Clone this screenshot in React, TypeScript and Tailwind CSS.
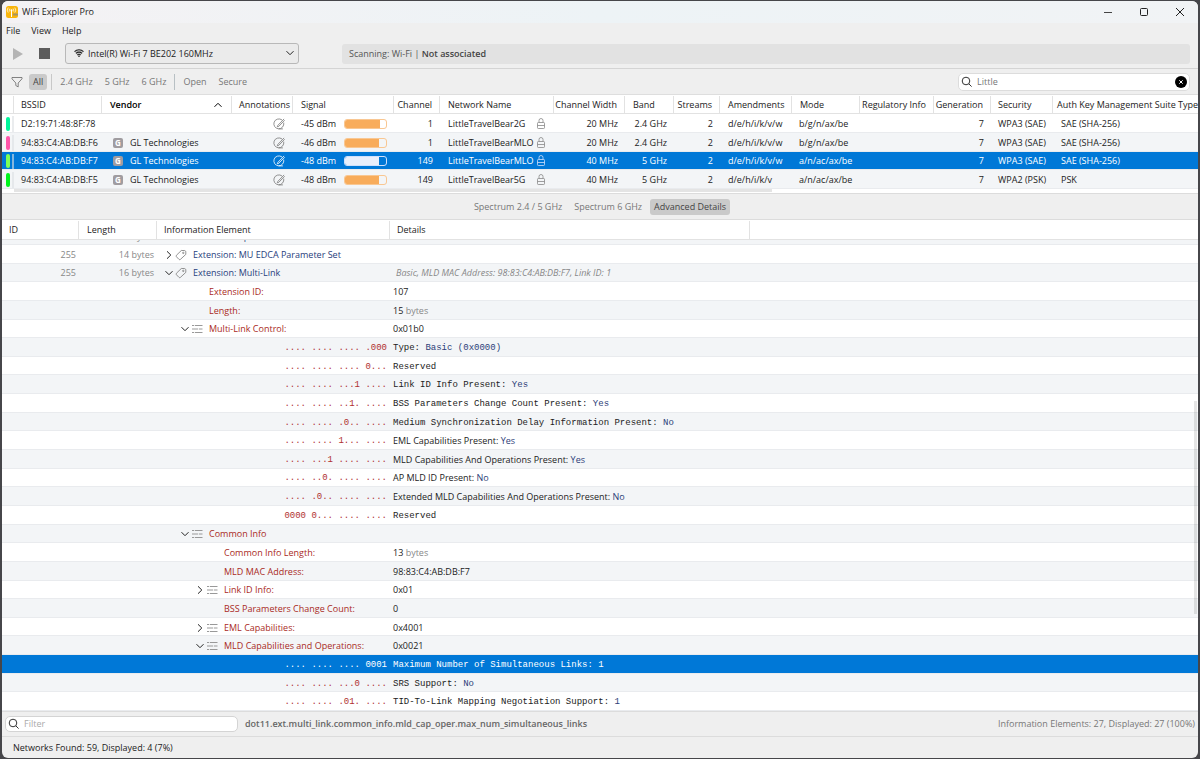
import type { ReactNode } from "react";
import clsx from "clsx";

type Network = {
  color: string;
  bssid: string;
  vendor?: string;
  signal: string;
  level: number;
  channel: string;
  name: string;
  width: string;
  band: string;
  amendments: string;
  mode: string;
  security: string;
  akm: string;
  selected?: boolean;
};

type Element = {
  id?: string;
  length?: string;
  depth?: 0 | 1 | 2;
  state?: "open" | "closed";
  label?: string;
  bits?: string;
  text?: string;
  value?: string;
  unit?: string;
  mono?: boolean;
  summary?: string;
  selected?: boolean;
};

const networks: Network[] = [
  { color: "bg-[#00f59b]", bssid: "D2:19:71:48:8F:78", signal: "-45 dBm", level: 86, channel: "1", name: "LittleTravelBear2G", width: "20 MHz", band: "2.4 GHz", amendments: "d/e/h/i/k/v/w", mode: "b/g/n/ax/be", security: "WPA3 (SAE)", akm: "SAE (SHA-256)" },
  { color: "bg-[#ff55aa]", bssid: "94:83:C4:AB:DB:F6", vendor: "GL Technologies", signal: "-46 dBm", level: 84, channel: "1", name: "LittleTravelBearMLO", width: "20 MHz", band: "2.4 GHz", amendments: "d/e/h/i/k/v/w", mode: "b/g/n/ax/be", security: "WPA3 (SAE)", akm: "SAE (SHA-256)" },
  { color: "bg-[#7dff55]", bssid: "94:83:C4:AB:DB:F7", vendor: "GL Technologies", signal: "-48 dBm", level: 82, channel: "149", name: "LittleTravelBearMLO", width: "40 MHz", band: "5 GHz", amendments: "d/e/h/i/k/v/w", mode: "a/n/ac/ax/be", security: "WPA3 (SAE)", akm: "SAE (SHA-256)", selected: true },
  { color: "bg-[#00f51d]", bssid: "94:83:C4:AB:DB:F5", vendor: "GL Technologies", signal: "-48 dBm", level: 82, channel: "149", name: "LittleTravelBear5G", width: "40 MHz", band: "5 GHz", amendments: "d/e/h/i/k/v", mode: "a/n/ac/ax/be", security: "WPA2 (PSK)", akm: "PSK" },
];

const elements: Element[] = [
  { id: "255", length: "14 bytes", depth: 0, state: "closed", label: "Extension: MU EDCA Parameter Set" },
  { id: "255", length: "16 bytes", depth: 0, state: "open", label: "Extension: Multi-Link", summary: "Basic, MLD MAC Address: 98:83:C4:AB:DB:F7, Link ID: 1" },
  { depth: 1, label: "Extension ID:", text: "107" },
  { depth: 1, label: "Length:", text: "15", unit: "bytes" },
  { depth: 1, state: "open", label: "Multi-Link Control:", text: "0x01b0" },
  { bits: ".... .... .... .000", text: "Type:", value: "Basic (0x0000)", mono: true },
  { bits: ".... .... .... 0...", text: "Reserved", mono: true },
  { bits: ".... .... ...1 ....", text: "Link ID Info Present:", value: "Yes", mono: true },
  { bits: ".... .... ..1. ....", text: "BSS Parameters Change Count Present:", value: "Yes", mono: true },
  { bits: ".... .... .0.. ....", text: "Medium Synchronization Delay Information Present:", value: "No", mono: true },
  { bits: ".... .... 1... ....", text: "EML Capabilities Present:", value: "Yes" },
  { bits: ".... ...1 .... ....", text: "MLD Capabilities And Operations Present:", value: "Yes" },
  { bits: ".... ..0. .... ....", text: "AP MLD ID Present:", value: "No" },
  { bits: ".... .0.. .... ....", text: "Extended MLD Capabilities And Operations Present:", value: "No" },
  { bits: "0000 0... .... ....", text: "Reserved", mono: true },
  { depth: 1, state: "open", label: "Common Info" },
  { depth: 2, label: "Common Info Length:", text: "13", unit: "bytes" },
  { depth: 2, label: "MLD MAC Address:", text: "98:83:C4:AB:DB:F7" },
  { depth: 2, state: "closed", label: "Link ID Info:", text: "0x01" },
  { depth: 2, label: "BSS Parameters Change Count:", text: "0" },
  { depth: 2, state: "closed", label: "EML Capabilities:", text: "0x4001" },
  { depth: 2, state: "open", label: "MLD Capabilities and Operations:", text: "0x0021" },
  { bits: ".... .... .... 0001", text: "Maximum Number of Simultaneous Links:", value: "1", mono: true, selected: true },
  { bits: ".... .... ...0 ....", text: "SRS Support:", value: "No", mono: true },
  { bits: ".... .... .01. ....", text: "TID-To-Link Mapping Negotiation Support:", value: "1", mono: true },
];

const networkCols =
  "grid grid-cols-[12px_88px_130px_61px_101px_46px_114px_71px_49px_46px_72px_68px_74px_57px_62px_1fr] items-center";
const elementCols = "grid grid-cols-[77px_78px_233px_360px_1fr] items-center";
const monoFont = "font-['Liberation_Mono',monospace]";

function AppIcon() {
  return (
    <svg viewBox="0 0 12 12" className="size-3 shrink-0">
      <rect width="12" height="12" rx="2.5" fill="#f9b50b" />
      <path d="M5.5 5v6" stroke="#fff" strokeWidth="1" />
      <path d="M3.8 2.6a2.2 2.2 0 0 0 0 3M7.2 2.6a2.2 2.2 0 0 1 0 3M2.2 1.6a4 4 0 0 0 0 5M8.8 1.6a4 4 0 0 1 0 5" fill="none" stroke="#fff" strokeWidth=".7" />
      <circle cx="5.5" cy="4.2" r="1" fill="#fff" />
      <rect x="7" y="7.5" width="5" height="2" rx=".5" fill="#a39468" />
    </svg>
  );
}

function Chevron({ open, className }: { open?: boolean; className?: string }) {
  return (
    <svg viewBox="0 0 10 10" className={clsx("size-2.5 shrink-0", className)} fill="none" stroke="currentColor" strokeWidth="1">
      <path d={open ? "M1.5 3.2 5 6.7l3.5-3.5" : "M3 1.3 6.8 5 3 8.7"} />
    </svg>
  );
}

function SearchIcon() {
  return (
    <svg viewBox="0 0 12 12" className="size-3 shrink-0" fill="none" stroke="#333" strokeWidth="1">
      <circle cx="5" cy="5" r="3.8" />
      <path d="m7.8 7.8 2.8 2.8" />
    </svg>
  );
}

function TagIcon() {
  return (
    <svg viewBox="0 0 12 12" className="size-3 shrink-0" fill="none" stroke="#777" strokeWidth=".8" strokeLinejoin="round">
      <path d="M6.3 1.5h2.9c1 0 1.6.6 1.6 1.6v2.3l-5.4 5c-.5.4-1 .4-1.4 0L1.4 7.7c-.4-.4-.4-.9 0-1.4z" />
      <circle cx="8.3" cy="3.9" r=".7" />
    </svg>
  );
}

function FieldsIcon() {
  return (
    <svg viewBox="0 0 12 12" className="size-3 shrink-0" stroke="#999" strokeWidth="1">
      <path d="M1 2.5h2M3.8 2.5h7.7M1 6h6M7.8 6h3.7M1 9.500h2M3.8 9.500h7.7" />
    </svg>
  );
}

function AnnotationIcon() {
  return (
    <svg viewBox="0 0 12 12" className="size-3" fill="none" stroke="currentColor" strokeWidth=".8" strokeLinecap="round">
      <path d="M8.7 1.7A5 5 0 1 0 10.8 5" />
      <path d="m10.8 1.2-6 6.2-.5 1.4 1.5-.5 5.6-5.8M6 10.900h3.500" />
    </svg>
  );
}

function LockIcon() {
  return (
    <svg viewBox="0 0 10 12" className="h-3 w-2.5" fill="none" stroke="currentColor" strokeWidth=".8">
      <rect x="1.5" y="4.5" width="7" height="6" rx=".8" />
      <path d="M3 4.500v-2a2 2 0 0 1 4 0v2M1.500 7.500h7" />
    </svg>
  );
}

function Th({ children, className }: { children?: ReactNode; className?: string }) {
  return (
    <th
      scope="col"
      className={clsx("flex h-full items-center whitespace-nowrap border-r border-[#e2e2e2] text-left font-normal", className ?? "px-[7px]")}
    >
      {children}
    </th>
  );
}

function FilterButton({ children, active }: { children: ReactNode; active?: boolean }) {
  return (
    <button type="button" className={clsx("h-4 rounded-[3px] px-1", active ? "bg-[#cacaca] text-[#444]" : "text-[#777]")}>
      {children}
    </button>
  );
}

function NetworkTable() {
  return (
    <table className="flex flex-col bg-white">
      <thead>
        <tr className={clsx(networkCols, "h-[19px] border-b border-[#e2e2e2] pt-px")}>
          <Th className="px-0" />
          <Th>BSSID</Th>
          <Th className="justify-between px-2 font-semibold text-black">
            Vendor
            <Chevron open className="size-2 rotate-180" />
          </Th>
          <Th>Annotations</Th>
          <Th className="px-2">Signal</Th>
          <Th className="justify-end px-[7px]">Channel</Th>
          <Th className="px-2">Network Name</Th>
          <Th className="justify-end px-[7px]">Channel Width</Th>
          <Th className="px-2">Band</Th>
          <Th className="justify-end px-[7px]">Streams</Th>
          <Th className="px-2">Amendments</Th>
          <Th className="px-2">Mode</Th>
          <Th className="justify-end px-[7px]">Regulatory Info</Th>
          <Th className="justify-end px-[7px]">Generation</Th>
          <Th>Security</Th>
          <Th className="pl-1">Auth Key Management Suite Type</Th>
        </tr>
      </thead>
      <tbody className="grid h-[75px] auto-rows-fr">
        {networks.map((n) => (
          <tr
            key={n.bssid}
            className={clsx(networkCols, "border-b border-[#e9ebee] pt-[2px]", n.selected ? "bg-[#0078d7] text-white" : "odd:bg-white even:bg-[#f3f5f7]")}
          >
            <td className="flex h-full items-center border-r-2 border-[#dcdfe2]/60 pl-1">
              <span className={clsx("h-3.5 w-1 rounded-sm", n.color)} />
            </td>
            <td className="pl-[7px]">{n.bssid}</td>
            <td className="flex items-center gap-[7px] pl-[11px]">
              {n.vendor && (
                <>
                  <span className="grid size-2.5 place-items-center rounded-[2px] bg-[#a09ca0] text-[8px] font-bold leading-none text-white">G</span>
                  {n.vendor}
                </>
              )}
            </td>
            <td className={clsx("flex justify-end pr-2", n.selected ? "text-white" : "text-[#777]")}>
              <AnnotationIcon />
            </td>
            <td className="flex items-center justify-between pl-2 pr-[7px]">
              {n.signal}
              <span className={clsx("h-2.5 w-[43px] overflow-hidden rounded-[3px] border", n.selected ? "border-[#cfe0fb]" : "border-[#f9c792]")}>
                <span className={clsx("block h-full", n.selected ? "bg-[#e9effb]" : "bg-[#f8ac5b]")} style={{ width: `${n.level}%` }} />
              </span>
            </td>
            <td className="pr-[7px] text-right">{n.channel}</td>
            <td className="flex items-center justify-between pl-2 pr-2">
              {n.name}
              <span className={n.selected ? "text-[#cfe0fb]" : "text-[#888]"}>
                <LockIcon />
              </span>
            </td>
            <td className="pr-[7px] text-right">{n.width}</td>
            <td className="pr-[7px] text-right">{n.band}</td>
            <td className="pr-[7px] text-right">2</td>
            <td className="pl-2">{n.amendments}</td>
            <td className="pl-[7px]">{n.mode}</td>
            <td />
            <td className="pr-[7px] text-right">7</td>
            <td className="pl-[7px]">{n.security}</td>
            <td className="pl-2">{n.akm}</td>
          </tr>
        ))}
      </tbody>
    </table>
  );
}

function ElementRow({ el }: { el: Element }) {
  return (
    <tr
      className={clsx(
        elementCols,
        "min-h-0 overflow-hidden border-b border-[#e9ebee] pt-[2px]",
        el.selected ? "bg-[#0078d7] text-white" : "odd:bg-white even:bg-[#f3f5f7]",
      )}
    >
      <td className="pr-[3px] text-right text-[#888]">{el.id}</td>
      <td className="pr-[3px] text-right text-[#888]">{el.length}</td>
      {el.bits ? (
        <td className={clsx(monoFont, "whitespace-pre pr-[3px] text-right", el.selected ? "text-white" : "text-[#b03030]")}>{el.bits}</td>
      ) : (
        <td
          className={clsx(
            "flex items-center",
            el.depth === 0 && "pl-[7px] text-[#28407c]",
            el.depth === 1 && "pl-[23px] text-[#a92a24]",
            el.depth === 2 && "pl-[38px] text-[#a92a24]",
          )}
        >
          <span className="flex w-[29px] items-center gap-px">
            {el.state && (
              <>
                <button type="button" aria-label={el.state === "open" ? "Collapse" : "Expand"} className="text-[#222]">
                  <Chevron open={el.state === "open"} />
                </button>
                {el.depth === 0 ? <TagIcon /> : <FieldsIcon />}
              </>
            )}
          </span>
          {el.label}
        </td>
      )}
      <td className={clsx("whitespace-nowrap pl-[3px]", el.mono && monoFont)}>
        {el.summary && <em className="pl-[3px] text-[#888]">{el.summary}</em>}
        {el.text}
        {el.value && <span className={el.selected ? "text-white" : "text-[#2c3e78]"}> {el.value}</span>}
        {el.unit && <span className="text-[#888]"> {el.unit}</span>}
      </td>
      <td />
    </tr>
  );
}

function ElementTable() {
  return (
    <div className="relative flex min-h-0 flex-1 flex-col bg-white">
      <table className="flex min-h-0 flex-1 flex-col">
        <thead>
          <tr className={clsx(elementCols, "h-5 border-b border-[#e2e2e2] pt-px")}>
            <Th>ID</Th>
            <Th className="px-2">Length</Th>
            <Th>Information Element</Th>
            <Th>Details</Th>
            <th />
          </tr>
        </thead>
        {/* row scrolled most of the way under the header */}
        <tbody className="flex h-[5px] flex-col justify-end overflow-hidden border-b border-[#e9ebee] bg-[#f3f5f7]">
          <tr className={clsx(elementCols, "shrink-0 pb-px")}>
            <td className="pr-[3px] text-right text-[#888]">255</td>
            <td className="pr-[3px] text-right text-[#888]">7 bytes</td>
            <td className="pl-9 text-[#28407c]">Extension: Spatial Reuse Parameter</td>
          </tr>
        </tbody>
        <tbody className="grid min-h-0 flex-1 auto-rows-fr">
          {elements.map((el, i) => (
            <ElementRow key={i} el={el} />
          ))}
        </tbody>
      </table>
      <div className="absolute right-px top-[181px] h-[213px] w-[3px] bg-black/10" />
    </div>
  );
}

export default function App() {
  return (
    <div className="h-screen min-h-[600px] bg-[#46464a] px-[2px] py-px">
      <main className="flex h-full flex-col overflow-hidden rounded-md bg-[#efefef] font-['Open_Sans','Noto_Sans',sans-serif] text-[9px] leading-3 text-[#222]">
        <header className="flex h-[22px] shrink-0 items-center gap-1 bg-gradient-to-r from-[#f4f2f4] via-[#edf3f6] to-[#f1f3f5] pl-1">
          <AppIcon />
          <h1>WiFi Explorer Pro</h1>
          <div className="ml-auto flex items-center">
            <button type="button" aria-label="Minimize" className="grid w-9 place-items-center">
              <svg viewBox="0 0 10 10" className="size-2.5" stroke="#444"><path d="M1 5.5h8" /></svg>
            </button>
            <button type="button" aria-label="Maximize" className="grid w-9 place-items-center">
              <svg viewBox="0 0 10 10" className="size-2.5" fill="none" stroke="#222"><rect x="1.5" y="1.5" width="7" height="7" rx="1" /></svg>
            </button>
            <button type="button" aria-label="Close" className="grid w-9 place-items-center">
              <svg viewBox="0 0 10 10" className="size-2.5" stroke="#222"><path d="m1 1 8 8M9 1 1 9" /></svg>
            </button>
          </div>
        </header>

        <nav className="flex h-4 shrink-0 items-center gap-[11px] pl-1">
          <button type="button">File</button>
          <button type="button">View</button>
          <button type="button">Help</button>
        </nav>

        <section className="flex h-[30px] shrink-0 items-center border-b border-[#d4d4d4] pl-[11px] pr-2">
          <button type="button" aria-label="Start scan">
            <svg viewBox="0 0 10 12" className="h-3 w-2.5"><path d="M0 0 10 6 0 12z" fill="#b4b4b4" /></svg>
          </button>
          <button type="button" aria-label="Stop scan" className="ml-4 size-[11px] bg-[#5c5c5c]" />
          <div className="relative ml-[15px] w-[234px]">
            <svg viewBox="0 0 12 10" className="absolute left-2 top-[5px] h-2.5 w-3" fill="#222">
              <path d="M6 9.2 1.5 3.7a6.2 6.2 0 0 1 9 0z" fill="#ccc" />
              <path d="M1.5 3.6a6.4 6.4 0 0 1 9 0M3 5.4a4.2 4.2 0 0 1 6 0M4.4 7a2.2 2.2 0 0 1 3.2 0" fill="none" stroke="#222" strokeWidth="1.1" />
              <circle cx="6" cy="8.2" r=".8" />
            </svg>
            <select aria-label="Adapter" className="h-[21px] w-full appearance-none rounded-[3px] border border-[#b8b8b8] bg-[#ebebeb] pl-[22px]">
              <option>Intel(R) Wi-Fi 7 BE202 160MHz</option>
            </select>
            <Chevron open className="absolute right-1 top-[5px]" />
          </div>
          <p className="ml-[43px] h-5 flex-1 rounded-[3px] bg-[#e2e2e2] px-[7px] leading-5 text-[#555]">
            Scanning: Wi-Fi | <strong className="font-semibold text-[#444]">Not associated</strong>
          </p>
        </section>

        <section className="flex h-[26px] shrink-0 items-center border-b border-[#dedede] pl-[9px] pr-2">
          <svg viewBox="0 0 12 12" className="mr-1.5 size-3" fill="none" stroke="#666" strokeWidth=".8" strokeLinejoin="round">
            <path d="M1 1.5h10v1.3L7.2 7v3.9L4.8 9.500V7L1 2.800z" />
          </svg>
          <FilterButton active>All</FilterButton>
          <span className="mx-1 h-4 w-px bg-[#c8c8c8]" />
          <div className="flex gap-1">
            <FilterButton>2.4 GHz</FilterButton>
            <FilterButton>5 GHz</FilterButton>
            <FilterButton>6 GHz</FilterButton>
          </div>
          <span className="mx-1 h-4 w-px bg-[#b8c0c4]" />
          <div className="flex gap-1">
            <FilterButton>Open</FilterButton>
            <FilterButton>Secure</FilterButton>
          </div>
          <div className="ml-auto flex h-[18px] w-[232px] items-center gap-1 rounded-[5px] border border-[#dcdcdc] bg-white px-[2px]">
            <SearchIcon />
            <input aria-label="Search networks" defaultValue="Little" className="min-w-0 flex-1 text-[#777] outline-none" />
            <button type="button" aria-label="Clear search">
              <svg viewBox="0 0 12 12" className="size-3">
                <circle cx="6" cy="6" r="6" />
                <path d="m4.3 4.3 3.4 3.4m0-3.4L4.3 7.7" stroke="#fff" />
              </svg>
            </button>
          </div>
        </section>

        <NetworkTable />
        <div className="h-[5px] shrink-0 border-b border-[#dcdcdc] bg-white pl-3">
          <div className="h-[3px] w-[64%] bg-[#e4e4e4]" />
        </div>

        <nav className="flex h-[26px] shrink-0 items-center justify-center gap-1 border-b border-[#dcdcdc]">
          <FilterButton>Spectrum 2.4 / 5 GHz</FilterButton>
          <FilterButton>Spectrum 6 GHz</FilterButton>
          <FilterButton active>Advanced Details</FilterButton>
        </nav>

        <ElementTable />

        <section className="flex h-[26px] shrink-0 items-center border-y border-[#dcdcdc] px-[3px] text-[#777]">
          <div className="flex h-4 w-[233px] items-center gap-1 rounded-[5px] border border-[#d4d4d4] bg-white px-[2px]">
            <SearchIcon />
            <input aria-label="Filter elements" placeholder="Filter" className="min-w-0 flex-1 outline-none placeholder:text-[#aaa]" />
          </div>
          <strong className="ml-[7px] font-semibold text-[#666]">dot11.ext.multi_link.common_info.mld_cap_oper.max_num_simultaneous_links</strong>
          <span className="ml-auto">Information Elements: 27, Displayed: 27 (100%)</span>
        </section>
        <footer className="flex h-[21px] shrink-0 items-center pl-[11px]">Networks Found: 59, Displayed: 4 (7%)</footer>
      </main>
    </div>
  );
}
